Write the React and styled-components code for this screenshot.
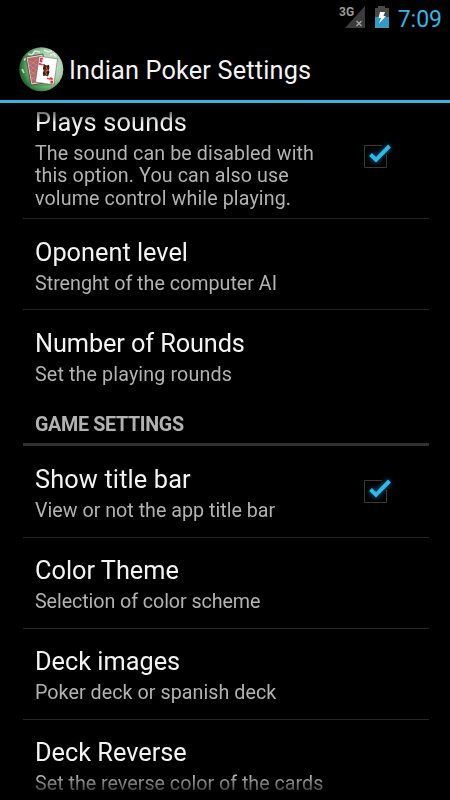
import React from 'react'
import styled, { createGlobalStyle, css } from 'styled-components'

const GlobalStyle = createGlobalStyle`
  * {
    box-sizing: border-box;
  }

  body {
    margin: 0;
    background: #000;
    color: #f3f3f3;
    font-family: Roboto, 'Noto Sans', sans-serif;
  }
`

const Screen = styled.div`
  display: flex;
  flex-direction: column;
  width: 450px;
  height: 800px;
  overflow: hidden;
  background: #000;
`

const StatusBar = styled.div`
  display: flex;
  flex: none;
  align-items: center;
  justify-content: flex-end;
  height: 36px;
  padding-right: 8px;
`

const Signal = styled.svg`
  width: 28px;
  height: 26px;
  margin: 0 8px 2px 0;
`

const Battery = styled.svg`
  width: 16px;
  height: 24px;
  margin: 0 8px 2px 0;
`

const Clock = styled.span`
  padding-top: 3px;
  color: #33b5e5;
  font-size: 23px;
  line-height: 33px;
`

const ActionBar = styled.header`
  display: flex;
  flex: none;
  align-items: center;
  height: 67px;
  padding: 3px 0 0 18px;
  border-bottom: 3px solid #33b5e5;
`

const AppIcon = styled.svg`
  width: 47px;
  height: 47px;
  margin-right: 4px;
`

const AppTitle = styled.h1`
  margin: 0;
  padding-top: 3px;
  font-size: 25.3px;
  font-weight: 400;
  letter-spacing: 0.17px;
  line-height: 30px;
`

const List = styled.main`
  display: flex;
  flex: 1;
  flex-direction: column;
  min-height: 0;
  padding: 0 21px 0 23px;
  overflow: hidden;
  mask-image: linear-gradient(
    transparent 0,
    #000 20px,
    #000 calc(100% - 24px),
    transparent 100%
  );
`

const Row = styled.div`
  display: flex;
  flex: none;
  align-items: center;
  height: ${props => props.$height || 91}px;
  margin-top: ${props => -(props.$scrolled || 0)}px;
  padding: 0 35px 0 12px;
  border-bottom: ${props => (props.$last ? 'none' : '1px solid #262626')};
`

const RowText = styled.div`
  flex: 1;
  align-self: flex-start;
  padding-top: ${props => props.$top || 19}px;
`

const RowTitle = styled.div`
  font-size: 25.3px;
  letter-spacing: ${props => props.$tracking || 0}px;
  line-height: 30px;
  white-space: nowrap;
`

const textGrey = css`
  color: #b2b2b2;
  font-size: 19.7px;
`

const Summary = styled.div`
  ${textGrey}
  letter-spacing: ${props => props.$tracking || 0}px;
  line-height: 22.5px;
  padding-top: 5px;
  white-space: pre;
`

const Category = styled.h2`
  ${textGrey}
  flex: none;
  height: 45px;
  margin: 0;
  padding: 12px 0 0 12px;
  border-bottom: 3px solid #303030;
  font-weight: 700;
  letter-spacing: -0.33px;
  line-height: 24px;
`

const CheckBox = styled.svg`
  flex: none;
  width: 32px;
  height: 32px;
  margin-bottom: 3px;
  overflow: visible;
`

const Glow = styled.path`
  filter: blur(2.5px);
`

const Check = () => (
  <CheckBox viewBox="0 0 32 32">
    <path d="M20 6.500H2.500v22h22V16" fill="none" stroke="#383838" />
    <Glow d="M8.500 15.500l5.500 5.300L27.500 7" fill="none" stroke="#087aa8" strokeWidth="6" opacity="0.65" />
    <path d="M8.500 15.500l5.500 5.300L27.500 7" fill="none" stroke="#33b5e5" strokeWidth="4" />
  </CheckBox>
)

const Logo = () => (
  <AppIcon viewBox="0 0 47 47">
    <defs>
      <radialGradient id="ball" cx="68%" cy="42%" r="66%">
        <stop offset="0" stopColor="#d9ead9" />
        <stop offset="0.55" stopColor="#a3c9a6" />
        <stop offset="0.85" stopColor="#4f9458" />
        <stop offset="1" stopColor="#276b32" />
      </radialGradient>
    </defs>
    <circle cx="23.300" cy="23.300" r="22" fill="url(#ball)" />
    <path
      d="M6 14l4-3M10 8l4 1 3-4 5 1M26 4l4 2 4-1M32 9l4-1 2 3M4 23l2 4"
      fill="none"
      stroke="#eef5ee"
      strokeWidth="1.600"
      opacity="0.8"
    />
    <path d="M13 42c7-4 17-2 24-5" fill="none" stroke="#3f9149" strokeWidth="2" opacity="0.6" />
    <path d="M8 11l17-3 1 29-13 2z" fill="#e6d5d1" stroke="#3d403a" strokeWidth="0.800" />
    <path d="M9.500 12.300L23 10l1 25.500-10 1.800z" fill="#b5676a" />
    <path
      d="M10 14l12 7M11 19l11 7M12 25l8 5M13 31l6 4M21 12l-10 8M22 16l-10 9M20 23l-8 7M19 29l-6 5"
      stroke="#d0a09d"
      strokeWidth="0.500"
    />
    <path d="M21.300 10.300l18.200 2.500-3.700 26L17.500 36z" fill="#fff" stroke="#555" strokeWidth="0.500" />
    <path
      d="M22.300 11.500l3 .4-.5 1.600-1.500.2 1.300 1.300-.4 1.500-2.700-.4zM21 17l2 .2 1 1 3-.2-.5 1.500-5.800-.8zM29 31.500l2 .7 1.500-1 2.500 1-.4 1.800-5.600-.8zM32.500 34.500l2.700.3-.4 3-2.600-.3z"
      fill="#ee3532"
    />
    <path d="M26 18.500l2.500 1 2.500-.8.5 3-.8 2.300.8 2-1.500 4.500-2.300-1-2.400.6-.5-3 1-2.500-1-2z" fill="#392019" />
    <path d="M28 20.500l1.500 3.500-2 2 1.500 3.500" fill="none" stroke="#d94a2d" strokeWidth="1.200" />
    <path d="M26.500 24l4 .6" stroke="#b58a35" strokeWidth="0.800" />
  </AppIcon>
)

const items = [
  {
    title: 'Plays sounds',
    summary:
      'The sound can be disabled with\nthis option. You can also use\nvolume control while playing.',
    checked: true,
    height: 124,
    scrolled: 8,
    top: 12.5,
    titleTracking: 0.2,
    tracking: 0.1,
  },
  { title: 'Oponent level', summary: 'Strenght of the computer AI' },
  {
    title: 'Number of Rounds',
    summary: 'Set the playing rounds',
    titleTracking: -0.1,
    tracking: 0.13,
    last: true,
  },
  { category: 'GAME SETTINGS' },
  {
    title: 'Show title bar',
    summary: 'View or not the app title bar',
    checked: true,
    height: 92,
    titleTracking: 0.15,
  },
  {
    title: 'Color Theme',
    summary: 'Selection of color scheme',
    top: 18,
    tracking: -0.08,
  },
  {
    title: 'Deck images',
    summary: 'Poker deck or spanish deck',
    top: 18,
    tracking: 0.05,
  },
  {
    title: 'Deck Reverse',
    summary: 'Set the reverse color of the cards',
    top: 18,
  },
]

const App = () => (
  <Screen>
    <GlobalStyle />
    <StatusBar>
      <Signal viewBox="0 0 28 26">
        <text x="1" y="12" fill="#999" fontSize="12" fontWeight="700">
          3G
        </text>
        <path d="M27 2v22H7z" fill="#3b3b3b" />
        <path d="M18.500 17l5 5M23.500 17l-5 5" stroke="#aaa" strokeWidth="1.200" />
      </Signal>
      <Battery viewBox="0 0 16 24">
        <path d="M4 1h7v2h4v9H1V3h3z" fill="#484848" />
        <path d="M1 12h14v11H1z" fill="#339bc3" />
        <path d="M6 7h5l-1.500 4H12l-7 7.500L7 13H4.500z" fill="#fff" />
      </Battery>
      <Clock>7:09</Clock>
    </StatusBar>
    <ActionBar>
      <Logo />
      <AppTitle>Indian Poker Settings</AppTitle>
    </ActionBar>
    <List>
      {items.map(item =>
        item.category ? (
          <Category key={item.category}>{item.category}</Category>
        ) : (
          <Row
            key={item.title}
            $height={item.height}
            $scrolled={item.scrolled}
            $last={item.last}
          >
            <RowText $top={item.top}>
              <RowTitle $tracking={item.titleTracking}>{item.title}</RowTitle>
              <Summary $tracking={item.tracking}>{item.summary}</Summary>
            </RowText>
            {item.checked && <Check />}
          </Row>
        )
      )}
    </List>
  </Screen>
)

export default App
